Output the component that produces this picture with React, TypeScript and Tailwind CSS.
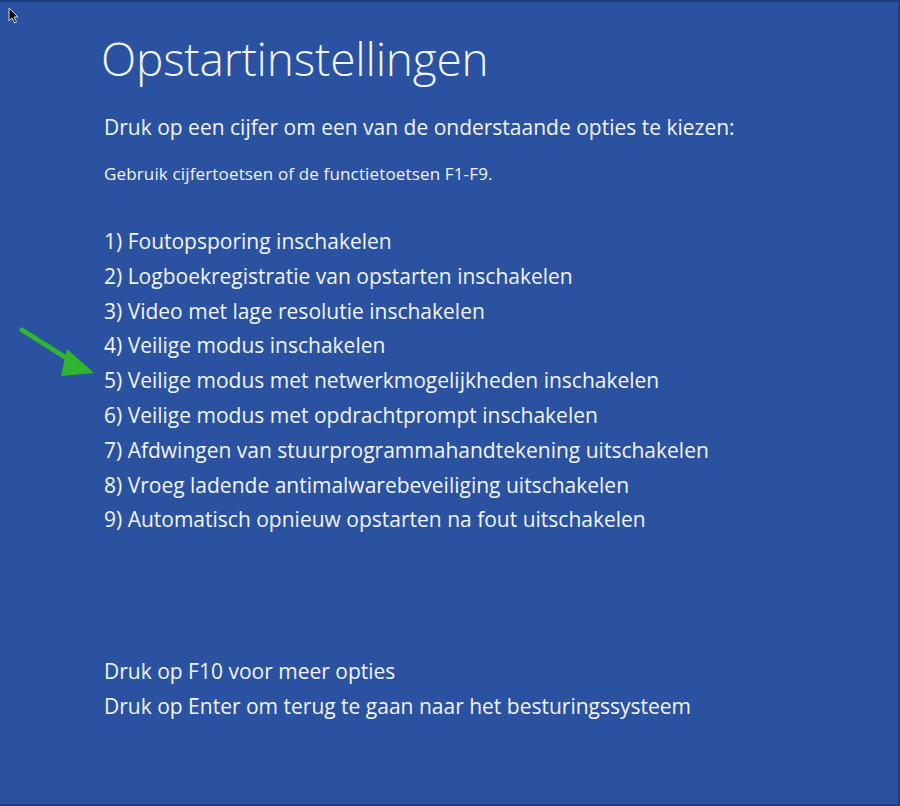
import React from "react";

const options = [
  "1) Foutopsporing inschakelen",
  "2) Logboekregistratie van opstarten inschakelen",
  "3) Video met lage resolutie inschakelen",
  "4) Veilige modus inschakelen",
  "5) Veilige modus met netwerkmogelijkheden inschakelen",
  "6) Veilige modus met opdrachtprompt inschakelen",
  "7) Afdwingen van stuurprogrammahandtekening uitschakelen",
  "8) Vroeg ladende antimalwarebeveiliging uitschakelen",
  "9) Automatisch opnieuw opstarten na fout uitschakelen",
];

export default function App() {
  return (
    <div
      className="relative w-[900px] h-[806px] bg-[#2a52a0] border-t-2 border-r-2 border-b-2 border-[#1e3f82] text-[#f2f5fb] overflow-hidden"
      style={{ fontFamily: '"Open Sans", "Noto Sans", sans-serif' }}
    >
      <svg className="absolute left-[8px] top-[5px]" width="12" height="18" viewBox="0 0 12 18">
        <path d="M1 1 L1 14 L4 11 L6.5 16 L8.5 15 L6 10 L10 10 Z" fill="#111" stroke="#cfd8ea" strokeWidth="1" />
      </svg>
      <svg className="absolute left-[18px] top-[322px]" width="80" height="56" viewBox="0 0 80 56">
        <line x1="4" y1="6" x2="58" y2="40" stroke="#2fb52f" strokeWidth="5" strokeLinecap="round" />
        <polygon points="49,25 76,49 43,52" fill="#2fb52f" />
      </svg>
      <div className="pl-[104px] pt-[26px] flex flex-col">
        <h1 className="-ml-[3px] text-[46px] font-light leading-[60px] tracking-[-0.2px]">Opstartinstellingen</h1>
        <p className="mt-[24px] text-[21px] leading-[30px]">Druk op een cijfer om een van de onderstaande opties te kiezen:</p>
        <p className="mt-[20px] text-[17px] leading-[24px] tracking-[0.15px]">Gebruik cijfertoetsen of de functietoetsen F1-F9.</p>
        <div className="mt-[38px] flex flex-col">
          {options.map((o) => (
            <div key={o} className="text-[21px] leading-[34.8px]">{o}</div>
          ))}
        </div>
        <div className="mt-[117px] flex flex-col">
          <div className="text-[21px] leading-[35px]">Druk op F10 voor meer opties</div>
          <div className="text-[21px] leading-[35px]">Druk op Enter om terug te gaan naar het besturingssysteem</div>
        </div>
      </div>
    </div>
  );
}
